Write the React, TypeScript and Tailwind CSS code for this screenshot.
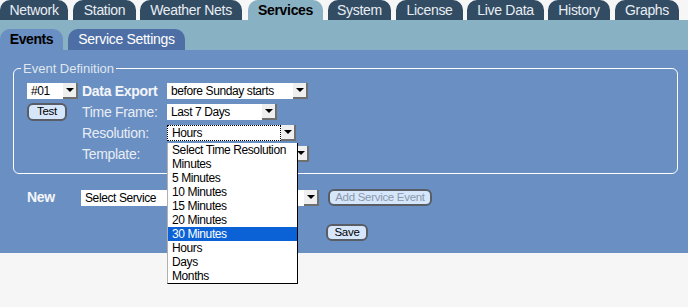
import React from "react";

const tabs = [
  { label: "Network", cls: "w-[68px]" },
  { label: "Station", cls: "w-[63px] ml-[5px]" },
  { label: "Weather Nets", cls: "w-[102px] ml-[4px]" },
  { label: "Services", cls: "w-[75px] ml-[6px]", active: true },
  { label: "System", cls: "w-[63px] ml-[5px]" },
  { label: "License", cls: "w-[67px] ml-[5px]" },
  { label: "Live Data", cls: "w-[77px] ml-[4px]" },
  { label: "History", cls: "w-[62px] ml-[4px]" },
  { label: "Graphs", cls: "w-[64px] ml-[5px]" },
];

const resolutions = [
  "Select Time Resolution",
  "Minutes",
  "5 Minutes",
  "10 Minutes",
  "15 Minutes",
  "20 Minutes",
  "30 Minutes",
  "Hours",
  "Days",
  "Months",
];

function Select({ value, className = "", focused = false }: { value: string; className?: string; focused?: boolean }) {
  return (
    <div className={`flex h-[16px] bg-white ${className}`}>
      <div
        className={`flex-1 flex items-center pl-[4px] text-[12px] tracking-[-0.4px] text-black whitespace-nowrap overflow-hidden ${
          focused ? "border border-dotted border-black" : ""
        }`}
      >
        {value}
      </div>
      <div className="w-[15px] flex items-center justify-center bg-[#efefef] border-r-2 border-b-2 border-[#6f6f6f]">
        <div className="w-0 h-0 border-x-[4px] border-x-transparent border-t-[4px] border-t-black" />
      </div>
    </div>
  );
}

function Button({ children, className = "", disabled = false }: { children: React.ReactNode; className?: string; disabled?: boolean }) {
  return (
    <button
      className={`h-[17px] flex items-center justify-center rounded-[6px] border-2 border-[#585d66] bg-[#d6e7fb] text-[11.5px] tracking-[-0.3px] ${
        disabled ? "text-[#8b98ab]" : "text-black"
      } ${className}`}
    >
      {children}
    </button>
  );
}

export default function App() {
  return (
    <div className="relative w-[688px] h-[307px] bg-[#f6f6f6] font-['Liberation_Sans',Arial,sans-serif] overflow-hidden">
      {/* main tabs */}
      <div className="flex h-[20px]">
        {tabs.map((t) => (
          <div
            key={t.label}
            className={`${t.cls} h-[20px] rounded-t-[10px] text-center text-[14px] tracking-[-0.3px] leading-[20px] whitespace-nowrap ${
              t.active ? "bg-[#88b1c3] text-black font-bold" : "bg-[#324c64] text-[#e8eef3]"
            }`}
          >
            {t.label}
          </div>
        ))}
      </div>

      {/* sub tabs */}
      <div className="flex items-end h-[30px] bg-[#88b1c3]">
        <div className="w-[63px] h-[21px] rounded-t-[10px] bg-[#6a8fc2] text-center text-[14px] tracking-[-0.4px] leading-[21px] font-bold text-black">
          Events
        </div>
        <div className="w-[117px] ml-[5px] h-[21px] rounded-t-[10px] bg-[#4e6fa5] text-center text-[14px] tracking-[-0.3px] leading-[21px] text-white whitespace-nowrap">
          Service Settings
        </div>
      </div>

      {/* panel */}
      <div className="h-[203px] bg-[#6a8fc2] pt-[11px]">
        <fieldset className="ml-[13px] w-[665px] border border-white rounded-[6px] px-[13px] pt-[7px] pb-[11px]">
          <legend className="ml-[-6px] px-[2px] text-[13px] leading-[15px] text-[#dfe6ef]">Event Definition</legend>
          <div className="grid grid-cols-[55px_85px_1fr] auto-rows-[16px] gap-y-[5px] items-center">
            <Select value="#01" className="w-[51px]" />
            <div className="text-[14px] tracking-[-0.3px] font-bold text-[#f4f6fa] leading-[16px]">Data Export</div>
            <Select value="before Sunday starts" className="w-[141px]" />

            <Button className="w-[40px] h-[18px]">Test</Button>
            <div className="text-[14px] tracking-[-0.3px] text-[#e8edf5] leading-[16px]">Time Frame:</div>
            <Select value="Last 7 Days" className="w-[110px]" />

            <div />
            <div className="text-[14px] tracking-[-0.3px] text-[#e8edf5] leading-[16px]">Resolution:</div>
            <Select value="Hours" className="w-[129px]" focused />

            <div />
            <div className="text-[14px] tracking-[-0.3px] text-[#e8edf5] leading-[16px]">Template:</div>
            <Select value="" className="w-[142px]" />
          </div>
        </fieldset>

        <div className="flex items-center h-[17px] mt-[15px] pl-[27px]">
          <div className="w-[54px] text-[14px] tracking-[-0.3px] font-bold text-[#f4f6fa]">New</div>
          <Select value="Select Service" className="w-[238px]" />
          <Button disabled className="w-[104px] ml-[9px]">Add Service Event</Button>
        </div>
        <div className="mt-[18px] ml-[326px]">
          <Button className="w-[42px]">Save</Button>
        </div>
      </div>

      {/* open dropdown */}
      <div className="absolute left-[167px] top-[143px] w-[131px] h-[141px] bg-white border-l border-l-[#b0b0b0] border-r border-b border-black">
        {resolutions.map((r) => (
          <div
            key={r}
            className={`h-[14px] leading-[14px] pl-[4px] text-[12px] tracking-[-0.4px] whitespace-nowrap ${
              r === "30 Minutes" ? "bg-[#0b62d6] text-white" : "text-black"
            }`}
          >
            {r}
          </div>
        ))}
      </div>
    </div>
  );
}
